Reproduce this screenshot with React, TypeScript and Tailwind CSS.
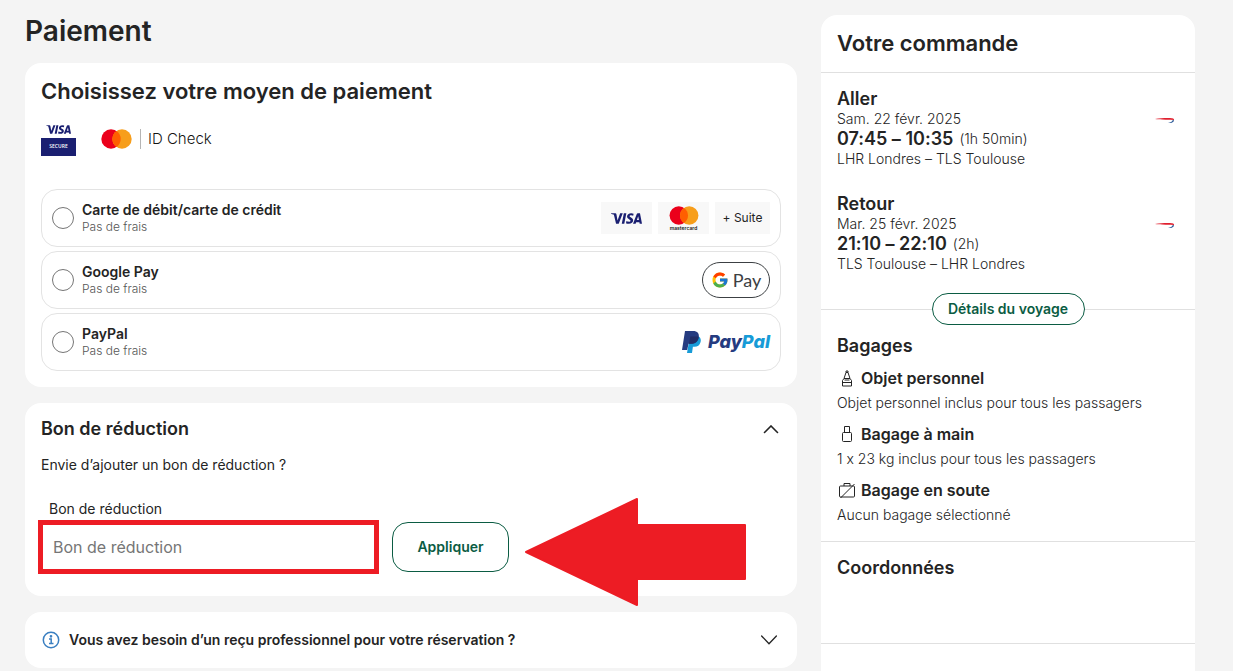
import type { ReactNode } from "react";
import { FcGoogle } from "react-icons/fc";
import { SiVisa } from "react-icons/si";

const FLIGHTS = [
  {
    title: "Aller",
    date: "Sam. 22 févr. 2025",
    time: "07:45 – 10:35",
    duration: "(1h 50min)",
    route: "LHR Londres – TLS Toulouse",
  },
  {
    title: "Retour",
    date: "Mar. 25 févr. 2025",
    time: "21:10 – 22:10",
    duration: "(2h)",
    route: "TLS Toulouse – LHR Londres",
  },
];

const BAGS: { title: string; text: string; icon: ReactNode }[] = [
  { title: "Objet personnel", text: "Objet personnel inclus pour tous les passagers", icon: <BackpackIcon /> },
  { title: "Bagage à main", text: "1 x 23 kg inclus pour tous les passagers", icon: <CabinBagIcon /> },
  { title: "Bagage en soute", text: "Aucun bagage sélectionné", icon: <NoSuitcaseIcon /> },
];

const METHODS: { id: string; title: string; logos: ReactNode }[] = [
  { id: "card", title: "Carte de débit/carte de crédit", logos: <CardLogos /> },
  { id: "gpay", title: "Google Pay", logos: <GooglePayLogo /> },
  { id: "paypal", title: "PayPal", logos: <PayPalLogo /> },
];

export default function App() {
  return (
    <div className="flex min-h-screen gap-6 bg-[#f4f4f4] pl-[25px] pr-[38px] font-['Inter',sans-serif] text-sm text-[#242424] [font-feature-settings:'calt'_0]">
      <main className="min-w-0 flex-1 pb-[3px] pt-[13px]">
        <h1 className="mb-[14px] text-[28px] font-semibold leading-9">Paiement</h1>
        <PaymentCard />
        <VoucherCard />
        <section className="mt-4 rounded-2xl bg-white">
          <button type="button" className="flex h-14 w-full items-center px-4 pr-5 text-left">
            <InfoIcon />
            <span className="ml-2 flex-1 font-semibold">
              Vous avez besoin d’un reçu professionnel pour votre réservation ?
            </span>
            <svg className="h-[10px] w-4" viewBox="0 0 16 10" fill="none" stroke="#242424" strokeWidth="1.3">
              <path d="M.6 1 8 8.800 15.400 1" strokeLinecap="round" />
            </svg>
          </button>
        </section>
      </main>
      <OrderSummary />
    </div>
  );
}

function PaymentCard() {
  return (
    <section className="rounded-2xl bg-white px-4 pb-4 pt-[14px]">
      <h2 className="text-[22px] font-semibold leading-7">Choisissez votre moyen de paiement</h2>
      <div className="mb-[33px] mt-[19px] flex h-8 items-center">
        <div className="flex w-[35px] flex-col items-center gap-1">
          <SiVisa className="h-[9px] w-[25px] text-[#1a1f71]" preserveAspectRatio="none" viewBox="0 8 24 8" />
          <span className="flex h-[18px] w-full items-center justify-center bg-[#1a1f71] font-['Open_Sans',sans-serif] text-[5px] font-semibold text-white">
            SECURE
          </span>
        </div>
        <div className="ml-[25px] flex items-center pb-[2px]">
          <MastercardMark className="h-5 w-[31px]" />
          <span className="ml-2 h-5 w-px bg-[#b5b5b5]" />
          <span className="ml-[7px] text-[15px] font-light text-[#141413]">ID Check</span>
        </div>
      </div>
      <div className="flex flex-col gap-1">
        {METHODS.map((method) => (
          <label
            key={method.id}
            htmlFor={method.id}
            className="flex h-[58px] items-center rounded-2xl border border-[#e3e3e3] px-[10px]"
          >
            <input
              id={method.id}
              type="radio"
              name="method"
              className="size-[22px] shrink-0 appearance-none rounded-full border border-[#767676] bg-white"
            />
            <span className="ml-2 flex-1">
              <span className="block font-semibold leading-[18px]">{method.title}</span>
              <span className="block text-xs font-light leading-4 text-[#565656]">Pas de frais</span>
            </span>
            {method.logos}
          </label>
        ))}
      </div>
    </section>
  );
}

function VoucherCard() {
  return (
    <section className="relative mt-4 rounded-2xl bg-white px-4 pb-6 pt-[14px]">
      <div className="flex items-center justify-between">
        <h3 className="text-lg font-semibold leading-6">Bon de réduction</h3>
        <button type="button" aria-label="Fermer" className="pr-[2px]">
          <svg className="h-[9px] w-4" viewBox="0 0 16 9" fill="none" stroke="#242424" strokeWidth="1.600">
            <path d="M1.500 7.500 8 1l6.500 6.500" strokeLinecap="round" />
          </svg>
        </button>
      </div>
      <p className="mt-[14px] leading-5">Envie d’ajouter un bon de réduction ?</p>
      <label htmlFor="voucher" className="mt-6 block pl-2 leading-5">
        Bon de réduction
      </label>
      <div className="mt-[3px] flex items-center gap-4">
        <input
          id="voucher"
          type="text"
          placeholder="Bon de réduction"
          className="h-12 w-[335px] bg-white px-3 text-base outline-[5px] -outline-offset-2 outline-[#ed1c24] placeholder:text-[#767676]"
        />
        <button
          type="button"
          className="h-[50px] w-[117px] rounded-2xl border border-[#0b5c43] font-semibold text-[#0b5c43]"
        >
          Appliquer
        </button>
      </div>
      <svg className="absolute left-[500px] top-[94px] z-10 h-[110px] w-[221px]" viewBox="0 0 221 110">
        <path
          d="M1 55 112 2V28H220V82H112V108Z"
          fill="#ed1c24"
          stroke="#ed1c24"
          strokeWidth="2"
          strokeLinejoin="round"
        />
      </svg>
    </section>
  );
}

function OrderSummary() {
  return (
    <aside className="mt-[15px] w-[374px] shrink-0 rounded-t-2xl bg-white">
      <h2 className="border-b border-[#e0e0e0] px-4 py-[14px] text-[22px] font-semibold leading-[29px]">
        Votre commande
      </h2>
      <div className="flex flex-col gap-[25px] px-4 pt-4">
        {FLIGHTS.map((flight) => (
          <div key={flight.title} className="flex items-start justify-between">
            <div className="font-light leading-5">
              <h3 className="text-lg font-semibold leading-5">{flight.title}</h3>
              <p>{flight.date}</p>
              <p className="flex h-5 items-center gap-[6px]">
                <strong className="text-lg font-semibold leading-5">{flight.time}</strong>
                {flight.duration}
              </p>
              <p>{flight.route}</p>
            </div>
            <AirlineRibbon />
          </div>
        ))}
      </div>
      <div className="mt-[19px] flex items-center">
        <span className="h-px flex-1 bg-[#e0e0e0]" />
        <button
          type="button"
          className="h-8 w-[153px] rounded-full border border-[#0b5c43] font-semibold text-[#0b5c43]"
        >
          Détails du voyage
        </button>
        <span className="h-px flex-1 bg-[#e0e0e0]" />
      </div>
      <div className="px-4 pb-[15px] pt-[9px]">
        <h3 className="text-lg font-semibold leading-6">Bagages</h3>
        {BAGS.map((bag) => (
          <div key={bag.title} className="pb-px pt-2">
            <h4 className="flex items-center gap-1 text-base font-semibold leading-6">
              {bag.icon}
              {bag.title}
            </h4>
            <p className="pt-[3px] font-light leading-5">{bag.text}</p>
          </div>
        ))}
      </div>
      <div className="h-[103px] border-y border-[#e0e0e0] px-4 pt-[14px]">
        <h3 className="text-lg font-semibold leading-6">Coordonnées</h3>
      </div>
    </aside>
  );
}

function CardLogos() {
  return (
    <span className="flex gap-[6px]">
      <span className="flex h-8 w-[51px] items-center justify-center bg-[#f8f8f8]">
        <SiVisa className="h-[11px] w-[31px] text-[#1a1f71]" preserveAspectRatio="none" viewBox="0 8 24 8" />
      </span>
      <span className="flex h-8 w-[51px] flex-col items-center justify-center bg-[#f8f8f8]">
        <MastercardMark className="h-[19px] w-[30px]" />
        <span className="text-[5px] font-semibold leading-[6px] text-[#141413]">mastercard</span>
      </span>
      <span className="flex h-8 w-[55px] items-center justify-center bg-[#f8f8f8] text-xs">+ Suite</span>
    </span>
  );
}

function GooglePayLogo() {
  return (
    <span className="flex h-9 w-[68px] items-center justify-center gap-1 rounded-full border border-[#3c4043]">
      <FcGoogle className="size-[18px]" />
      <span className="font-['Lato',sans-serif] text-lg leading-5 text-[#3c4043]">Pay</span>
    </span>
  );
}

function PayPalLogo() {
  return (
    <span className="flex items-center gap-[7px]">
      <svg className="h-[22px] w-[19px]" viewBox="0 0 19 22">
        <path d="M8 5h8c2.500 1 3.300 3.500 2.500 6.300-.8 3-3 4.500-6 4.500h-1.600L10 22H5Z" fill="#179bd7" />
        <path d="M3 0h8c4.500 0 6.500 2.500 5.700 6.500-.9 4.400-3.700 6.200-7.700 6.200H6.500L5.200 19H0Z" fill="#253b80" />
        <path d="M8.300 5.500h7.300l1.100.7c-.8 4.700-3.600 6.500-7.700 6.500H7Z" fill="#222d65" />
      </svg>
      <span className="text-lg font-extrabold italic leading-6 text-[#253b80]">
        Pay<span className="text-[#179bd7]">Pal</span>
      </span>
    </span>
  );
}

function MastercardMark({ className }: { className: string }) {
  return (
    <svg className={className} viewBox="0 0 31 20">
      <circle cx="10" cy="10" r="9.700" fill="#eb001b" />
      <circle cx="21" cy="10" r="9.700" fill="#f79e1b" />
      <path d="M15.500 2a9.700 9.700 0 0 1 0 16 9.700 9.700 0 0 1 0-16Z" fill="#ff5f00" />
    </svg>
  );
}

function AirlineRibbon() {
  return (
    <svg className="mr-1 mt-7 h-[7px] w-5" viewBox="0 0 20 7">
      <path d="M0 2C6 1 13 .7 17 1.200c2 .3 2.500 1.300 1.800 2.300-.8-.6-2-.7-4-.7C9 2.800 5 2.600 0 2Z" fill="#e0202f" />
      <path d="M13 6c2.500-.5 4.300-1.300 4.800-3l1.200.2C19 5.200 16.500 6.300 13 6Z" fill="#2e5c99" />
    </svg>
  );
}

function InfoIcon() {
  return (
    <svg className="size-5" viewBox="0 0 20 20" fill="none" stroke="#3a7fc1" strokeWidth="1.500">
      <circle cx="10" cy="10" r="7.700" />
      <path d="M8 9h2.200v4.500M8 13.500h4.500" />
      <circle cx="10" cy="6.300" r=".6" fill="#3a7fc1" />
    </svg>
  );
}

function BackpackIcon() {
  return (
    <svg className="size-5" viewBox="0 0 20 20" fill="none" stroke="#242424">
      <path d="M9 4.500V3h2v1.500M7 10.500 9 4.500h2l2 6M5.500 18v-5.500l1.500-2h6l1.500 2V18zM5.500 14.500h9M7.500 12h5" />
    </svg>
  );
}

function CabinBagIcon() {
  return (
    <svg className="size-5" viewBox="0 0 20 20" fill="none" stroke="#242424">
      <path d="M7.500 8.500v-6h5v6" />
      <rect x="5.500" y="8.500" width="9" height="9" rx="1" />
    </svg>
  );
}

function NoSuitcaseIcon() {
  return (
    <svg className="size-5" viewBox="0 0 20 20" fill="none" stroke="#242424">
      <rect x="2.500" y="6" width="15" height="11" rx="1" />
      <path d="M7 6V3.500h6V6M3.500 18 17.500 4" />
    </svg>
  );
}
